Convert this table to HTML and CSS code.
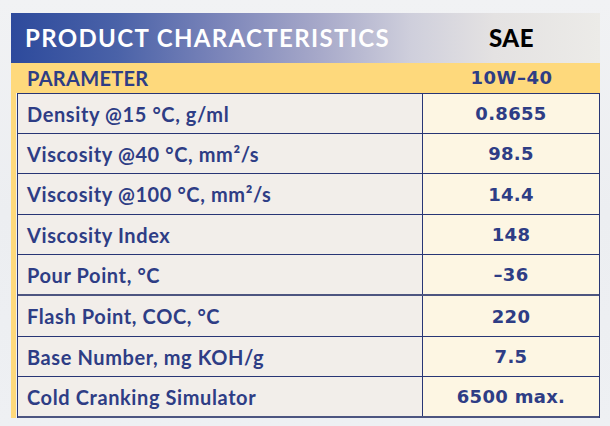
FILE: index.html
```html
<!DOCTYPE html>
<html>
<head>
<meta charset="utf-8">
<link rel="stylesheet" href="styles.css">
</head>
<body>
<div class="sheet">
  <div class="head">
    <div class="title">PRODUCT CHARACTERISTICS</div>
    <div class="sae">SAE</div>
  </div>
  <div class="subhead">
    <div class="param">PARAMETER</div>
    <div class="grade">10W–40</div>
  </div>
  <div class="bodywrap">
    <div class="strip"></div>
    <div class="table">
      <div class="row"><div class="label">Density @15 °C, g/ml</div><div class="value">0.8655</div></div>
      <div class="row"><div class="label">Viscosity @40 °C, mm²/s</div><div class="value">98.5</div></div>
      <div class="row"><div class="label">Viscosity @100 °C, mm²/s</div><div class="value">14.4</div></div>
      <div class="row"><div class="label">Viscosity Index</div><div class="value">148</div></div>
      <div class="row"><div class="label">Pour Point, °C</div><div class="value">–36</div></div>
      <div class="row"><div class="label">Flash Point, COC, °C</div><div class="value">220</div></div>
      <div class="row"><div class="label">Base Number, mg KOH/g</div><div class="value">7.5</div></div>
      <div class="row"><div class="label">Cold Cranking Simulator</div><div class="value">6500 max.</div></div>
    </div>
  </div>
</div>
</body>
</html>
```
FILE: styles.css
```css
html, body {
  margin: 0;
  padding: 0;
}
body {
  width: 610px;
  height: 426px;
  overflow: hidden;
  background: linear-gradient(180deg, #f1f2f4 0%, #eceef1 50%, #eef0f3 100%);
  font-family: "Lato", "Open Sans", sans-serif;
}
.sheet {
  padding: 13px 10px 0 11px;
}
.head {
  display: flex;
  height: 50px;
  background: linear-gradient(90deg, #2d4a9c 0%, #4a62a8 18%, #7a84b9 35%, #a6a8c9 52%, #cfcfdc 68%, #e4e2e2 82%, #ecebe8 100%);
}
.title {
  width: 412px;
  box-sizing: border-box;
  padding-left: 14px;
  color: #ffffff;
  font-weight: 700;
  font-size: 24px;
  line-height: 50px;
  letter-spacing: 1.35px;
}
.sae {
  flex: 1;
  text-align: center;
  color: #000000;
  font-weight: 900;
  font-size: 24px;
  line-height: 50px;
  letter-spacing: 0.5px;
}
.subhead {
  display: flex;
  height: 30px;
  background: #fed97c;
  color: #2e3d85;
}
.param {
  width: 412px;
  box-sizing: border-box;
  padding-left: 16px;
  font-weight: 700;
  font-size: 20px;
  line-height: 30px;
  letter-spacing: 0.3px;
}
.grade {
  flex: 1;
  text-align: center;
  font-family: "DejaVu Sans", sans-serif;
  font-weight: 700;
  font-size: 18px;
  line-height: 30px;
  letter-spacing: 0.5px;
}
.bodywrap {
  display: flex;
}
.strip {
  width: 5px;
  margin-right: 1px;
  background: #fed97c;
}
.table {
  flex: 1;
  border: 1px solid #283675;
  border-bottom: none;
}
.row {
  display: flex;
  height: 39px;
  border-bottom: 1px solid #283675;
}
.row:nth-child(5), .row:nth-child(8) {
  border-bottom: 2px solid #4d5580;
  height: 39px;
}
.row:nth-child(3), .row:nth-child(6) {
  height: 40px;
}
.label {
  width: 405px;
  box-sizing: border-box;
  padding-left: 9px;
  background: #f2eeea;
  border-right: 1px solid #283675;
  color: #2e3d85;
  font-weight: 700;
  font-size: 20px;
  letter-spacing: 0.6px;
  display: flex;
  align-items: center;
}
.value {
  flex: 1;
  background: #fdf6e3;
  color: #2e3d85;
  font-family: "DejaVu Sans", sans-serif;
  font-weight: 700;
  font-size: 18px;
  letter-spacing: 0.3px;
  display: flex;
  align-items: center;
  justify-content: center;
}
```
